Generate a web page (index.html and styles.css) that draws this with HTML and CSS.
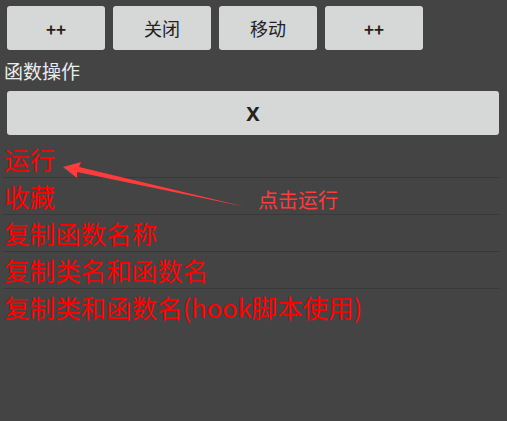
FILE: index.html
```html
<!DOCTYPE html>
<html lang="zh">
<head>
    <meta charset="UTF-8">
    <meta name="viewport" content="width=device-width, initial-scale=1.0">
    <title>函数操作</title>
    <link rel="stylesheet" href="styles.css">
</head>
<body>
    <div class="panel">
        <div class="top-bar">
            <button class="tool-btn bold">++</button>
            <button class="tool-btn">关闭</button>
            <button class="tool-btn">移动</button>
            <button class="tool-btn bold">++</button>
        </div>
        <div class="title">函数操作</div>
        <button class="close-btn">X</button>
        <ul class="menu">
            <li>运行</li>
            <li>收藏</li>
            <li>复制函数名称</li>
            <li>复制类名和函数名</li>
            <li class="last">复制类和函数名(hook脚本使用)</li>
        </ul>

        <!-- annotation -->
        <svg class="arrow" width="260" height="80" viewBox="0 0 260 80">
            <polygon points="63,27 81,22 79,27 246,67 77,32 77,38" fill="#ff3b3b"/>
        </svg>
        <span class="note">点击运行</span>
    </div>
</body>
</html>
```

FILE: styles.css
```css
body {
    margin: 0;
    background-color: #444444;
    font-family: "Noto Sans CJK SC", "Noto Sans", sans-serif;
    height: 421px;
    overflow: hidden;
}

.panel {
    position: relative;
    padding: 6px 0 0 0;
}

.top-bar {
    display: flex;
    gap: 8px;
    padding-left: 7px;
}

.tool-btn {
    width: 98px;
    height: 44px;
    border: none;
    border-radius: 3px;
    background-color: #d6d7d7;
    color: #222;
    font-family: "Noto Sans CJK SC", "Noto Sans", sans-serif;
    font-size: 18px;
    padding: 0;
}

.tool-btn.bold {
    font-weight: bold;
    font-size: 17px;
}

.title {
    color: #ececec;
    font-size: 19px;
    line-height: 24px;
    margin: 9px 0 8px 4px;
}

.close-btn {
    display: block;
    margin-left: 7px;
    width: 492px;
    height: 44px;
    border: none;
    border-radius: 3px;
    background-color: #d6d7d7;
    color: #222;
    font-family: "Noto Sans", sans-serif;
    font-size: 20px;
    font-weight: bold;
    padding: 0;
}

.menu {
    list-style: none;
    margin: 6px 7px 0 3px;
    padding: 0;
}

.menu li {
    height: 36px;
    line-height: 36px;
    border-bottom: 1px solid #393939;
    color: #ff0000;
    font-size: 25.5px;
    padding-left: 1px;
    white-space: nowrap;
}

.menu li.last {
    border-bottom: none;
}

.arrow {
    position: absolute;
    left: 0;
    top: 140px;
}

.note {
    position: absolute;
    left: 258px;
    top: 185px;
    color: #ff3b3b;
    font-size: 20px;
}
```
